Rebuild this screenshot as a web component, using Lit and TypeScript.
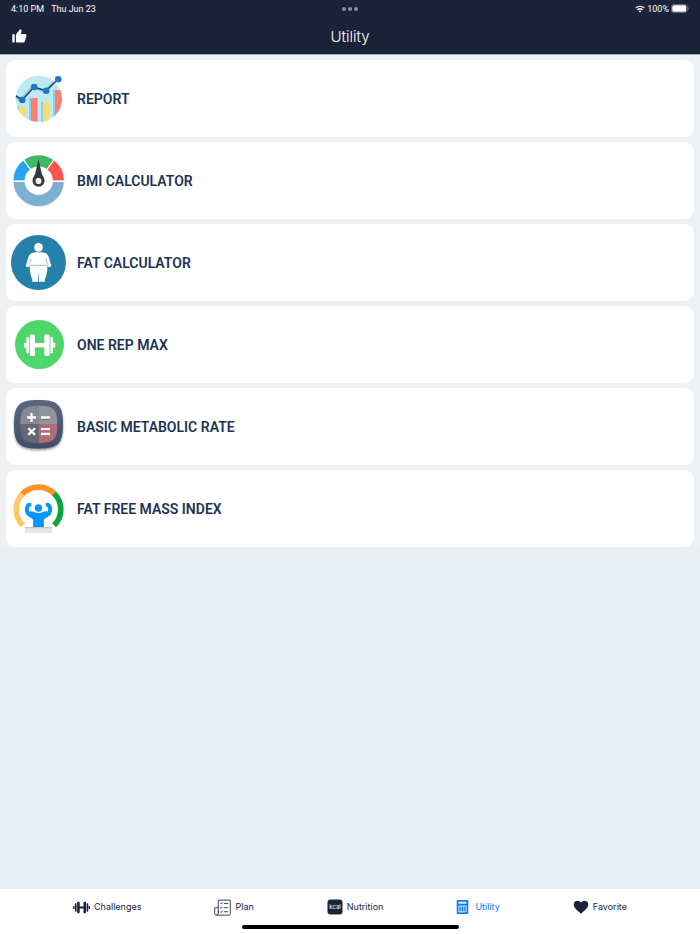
import { LitElement, html, svg, css } from "lit";
import { customElement, property, state } from "lit/decorators.js";
import { classMap } from "lit/directives/class-map.js";

const toolIcons: Record<string, unknown> = {
  report: svg`
    <defs><clipPath id="disc"><circle cx="38.8" cy="38.8" r="23.2"/></clipPath></defs>
    <circle cx="38.8" cy="38.8" r="23.2" fill="#bfeaf4"/>
    <g clip-path="url(#disc)">
      <path fill="#85d3e3" d="M17.5 46.7h3V62h-3zM29 38h3v24h-3zM41 42h3v20h-3zM53 30h3v32h-3z"/>
      <path fill="#f5dc6e" d="M19.3 46.7h6.5V62h-6.5zM43 42h6.6v20H43z"/>
      <path fill="#ff7d6e" d="M31 38h6.6v24H31zM55 30h7.5v32H55z"/>
      <path fill="none" stroke="#85d3e3" stroke-width="3" d="M15 36l5.500 4 12-13 12 4 12-11"/>
    </g>
    <path fill="none" stroke="#34404f" stroke-width="1.500" d="M16 36l6.200 4L34 27l12 3.800L58.200 19"/>
    <g fill="#1b78cc"><circle cx="22.200" cy="40" r="3.300"/><circle cx="34.200" cy="27" r="3.300"/><circle cx="46.200" cy="30.800" r="3.300"/><circle cx="58.200" cy="19.200" r="3.300"/></g>`,
  bmi: svg`
    <circle cx="38.700" cy="39.300" r="26" fill="#f0f0f0"/>
    <circle cx="38.700" cy="38.500" r="25.700" fill="#fff"/>
    <path fill="#25a4f5" d="M13.500 38.500A25.200 25.200 0 0 1 24 18L38.700 38.500z"/>
    <path fill="#3fb962" d="M24 18a25.200 25.200 0 0 1 29.400 0L38.700 38.500z"/>
    <path fill="#ff554b" d="M53.400 18a25.200 25.200 0 0 1 10.500 20.500H38.700z"/>
    <path fill="#7eb0d2" d="M13.500 39a25.200 25.200 0 0 0 50.400 0z"/>
    <path stroke="#fff" stroke-width="1.200" fill="none" d="M13 39.300h51.500M38.700 39L23.500 17.800M38.700 39l15.200-21.200"/>
    <circle cx="38.700" cy="38.800" r="14.200" fill="#fff"/>
    <path fill="#363a3d" d="M38.500 17.300L42 32.500c1.400 2.100 2.500 4 2.500 6.200a6 6 0 0 1-12 0c0-2.200 1.100-4.100 2.500-6.200z"/>
    <circle cx="38.500" cy="38.900" r="3" fill="#fff"/>`,
  fat: svg`
    <circle cx="38.500" cy="38.500" r="27.500" fill="#2581aa"/>
    <circle cx="38.500" cy="23.300" r="4.400" fill="#fff"/>
    <path fill="#fff" d="M35 28.200h7.200c3.600.4 5.800 2.200 6.700 5.300l2.200 7.500c.5 2-1.900 2.900-3.100 1.600l-.7-.8c.3 5.500-.9 10.500-2.600 13.900.1 1.200.5 1.600.5 2.100h-6.200l-.2-8.300h-.4l-.2 8.300H32c0-.5.400-.9.500-2.100-1.700-3.400-3-8.400-2.700-13.900l-.7.800c-1.200 1.300-3.600.4-3.100-1.600l2.200-7.500c.9-3.100 3.200-4.900 6.800-5.300z"/>
    <path fill="none" stroke="#2581aa" stroke-width=".5" d="M30 41.300h17.200M31.200 34.500l-1.700 6M45.900 34.500l1.700 6"/>`,
  dumbbell: svg`
    <circle cx="39.500" cy="38.500" r="24.500" fill="#4fd66b"/>
    <g fill="#fff"><rect x="29.700" y="28.500" width="5.300" height="21.500" rx="1.500"/><rect x="44.300" y="28.500" width="5.300" height="21.500" rx="1.500"/>
    <rect x="26.300" y="31" width="2.600" height="16.500" rx="1"/><rect x="50.400" y="31" width="2.600" height="16.500" rx="1"/>
    <rect x="24" y="36.800" width="2.500" height="5" rx=".8"/><rect x="52.800" y="36.800" width="2.500" height="5" rx=".8"/><rect x="34" y="37" width="11" height="4.400"/></g>`,
  bmr: svg`
    <defs>
      <linearGradient id="case" x2="0" y2="1"><stop stop-color="#5b6780"/><stop offset="1" stop-color="#434e65"/></linearGradient>
      <filter id="drop" x="-20%" y="-20%" width="140%" height="150%"><feDropShadow dx="0" dy="1.500" stdDeviation="1" flood-opacity=".4"/></filter>
      <clipPath id="pad"><path d="M38.800 17.700c15 0 18.500 3.500 18.500 18.600S53.800 55 38.800 55s-18.500-3.500-18.500-18.700 3.500-18.600 18.500-18.600z"/></clipPath>
    </defs>
    <path filter="url(#drop)" fill="url(#case)" d="M38.500 12C58 12 63 17 63 36.300s-5 24.400-24.500 24.400S14 55.600 14 36.300 19 12 38.500 12z"/>
    <g clip-path="url(#pad)"><path fill="#858b95" d="M20 17h18.700v19H20z"/><path fill="#91959d" d="M38.700 17H58v19H38.700z"/><path fill="#636975" d="M20 36h18.700v20H20z"/><path fill="#b46b78" d="M38.700 36H58v20H38.700z"/></g>
    <path fill="none" stroke="#333b4b" stroke-opacity=".35" stroke-width="2" d="M31.500 26v9M27 30.500h9M41.500 31H50M28.300 41.300l6.700 6.700M35 41.300L28.300 48M41.500 42H50M41.500 47H50"/>
    <path fill="none" stroke="#fff" stroke-width="2.300" d="M31.500 25v9M27 29.500h9M41 29.500h9M28.300 40.200l6.700 6.700M35 40.200l-6.700 6.700M41 41.200h9M41 46h9"/>`,
  mass: svg`
    <g fill="none" stroke-width="5.600">
      <path stroke="#ffc765" d="M22.900 55.300A22.200 22.200 0 0 1 22.900 23.500"/>
      <path stroke="#ff9227" d="M22.500 23.900a22.200 22.200 0 0 1 32 0"/>
      <path stroke="#09a63e" d="M54.100 23.500a22.200 22.200 0 0 1 0 31.800"/>
    </g>
    <circle cx="38.500" cy="38" r="3.700" fill="#0794fb"/>
    <path fill="none" stroke="#0794fb" stroke-width="4" stroke-linecap="round" stroke-linejoin="round" d="M28.500 35c-2 1.800-2 6.200-.5 8.500l6.200 4M48.500 35c2 1.800 2 6.200.5 8.500l-6.200 4"/>
    <path fill="#0794fb" d="M28 42.500c1.800-1.600 4.500-1.400 6.500-.3 2.500 1 5.500 1 8 0 2-1.100 4.700-1.300 6.500.3l-5.200 7.500.2 7.500H33l.2-7.500zM28 33h3.300v3.500H28zM45.700 33H49v3.500h-3.300z"/>
    <path fill="#e9e6e2" d="M25 57h27v6H25z"/><path fill="#c9c6c3" d="M25 57h27v1.200H25z"/>`,
};

const tabIcons: Record<string, unknown> = {
  challenges: svg`<svg viewBox="0 0 18 18" width="17" height="17" fill="currentColor" aria-hidden="true"><rect x="4.400" y="3" width="2.700" height="12" rx=".9"/><rect x="11.100" y="3" width="2.700" height="12" rx=".9"/><rect x="2" y="4.500" width="1.800" height="9" rx=".7"/><rect x="14.400" y="4.500" width="1.800" height="9" rx=".7"/><path d="M.2 7.300h1.400v3.400H.2zM16.600 7.300H18v3.400h-1.400zM6.500 8h5v2h-5z"/></svg>`,
  plan: svg`<svg viewBox="0 0 18 18" width="17" height="17" fill="none" stroke="currentColor" stroke-width=".9" aria-hidden="true"><path d="M4.500 14.500V1.200h12.800v14.300a1.600 1.600 0 0 1-1.600 1.600H2.500a1.800 1.800 0 0 1-1.800-1.800V9.200h3.800M4.500 13v2.200a2 2 0 0 1-2 1.900"/><path d="M6.500 4.500l1 1 1.800-2M6.500 9l1 1 1.800-2M6.500 13.300l1 1 1.800-2M10.500 4.800H15M10.500 9.200H15M10.500 13.500H15"/></svg>`,
  nutrition: svg`<svg viewBox="0 0 16 16" width="16" height="16" aria-hidden="true"><rect x=".5" y=".5" width="15" height="15" rx="3" fill="currentColor"/><text x="8" y="10" text-anchor="middle" font-size="6" fill="#fff">kcal</text></svg>`,
  utility: svg`<svg viewBox="0 0 13 16" width="13" height="16" aria-hidden="true"><rect x=".7" y="1" width="11.600" height="14" rx="1" fill="currentColor"/><path fill="#fff" d="M2.500 2.800h8v1.800h-8z"/><path stroke="#fff" stroke-width=".8" fill="none" d="M2.800 7h7.400v5.900H2.800zM5.200 7v5.900M7.800 7v5.900"/></svg>`,
  favorite: svg`<svg viewBox="0 0 16 16" width="16" height="16" fill="currentColor" aria-hidden="true"><path d="M8 14.800C3.500 11 .7 8.500.7 5.600c0-2.300 1.700-3.900 3.800-3.900 1.400 0 2.700.7 3.500 1.800.8-1.100 2.100-1.800 3.500-1.800 2.100 0 3.800 1.600 3.800 3.900 0 2.900-2.800 5.400-7.300 9.200z"/></svg>`,
};

@customElement("tool-card")
class ToolCard extends LitElement {
  @property() label = "";
  @property() icon = "";

  static styles = css`
    :host { display: block; }
    .card {
      display: flex; align-items: center; gap: 6px; width: 100%; padding: 0;
      border: 0; border-radius: 9px; background: #fff; color: #1d3354;
      font: 600 14px/20px Roboto, "Liberation Sans", sans-serif; text-align: left; cursor: pointer;
    }
    .icon { display: block; flex: none; }
  `;

  render() {
    return html`<button class="card" type="button">
      <svg class="icon" viewBox="6 0 65 77" width="65" height="77" aria-hidden="true">${toolIcons[this.icon]}</svg>
      <span>${this.label}</span>
    </button>`;
  }
}

@customElement("app-root")
class AppRoot extends LitElement {
  @state() private active = "utility";

  private tools = [
    { icon: "report", label: "REPORT" },
    { icon: "bmi", label: "BMI CALCULATOR" },
    { icon: "fat", label: "FAT CALCULATOR" },
    { icon: "dumbbell", label: "ONE REP MAX" },
    { icon: "bmr", label: "BASIC METABOLIC RATE" },
    { icon: "mass", label: "FAT FREE MASS INDEX" },
  ];

  private tabs = [
    { id: "challenges", label: "Challenges" },
    { id: "plan", label: "Plan" },
    { id: "nutrition", label: "Nutrition" },
    { id: "utility", label: "Utility" },
    { id: "favorite", label: "Favorite" },
  ];

  static styles = css`
    :host {
      display: flex; flex-direction: column; min-height: 100vh; background: #e9eff2;
      font-family: Roboto, "Liberation Sans", sans-serif; color: #1b2338;
    }
    svg { display: block; flex: none; }
    header { background: #1b2338; color: #fff; border-bottom: 1px solid #a9afb9; }
    .status, .nav { display: grid; grid-template-columns: 1fr auto 1fr; align-items: center; padding: 0 11px; }
    .status { height: 17px; font-size: 9px; line-height: 16px; }
    .clock { display: flex; gap: 7px; }
    .dots { display: flex; gap: 2px; }
    .dot { width: 4px; height: 4px; border-radius: 50%; background: #8d91a0; }
    .power { display: flex; align-items: center; justify-content: flex-end; gap: 2px; }
    .nav { height: 37px; }
    .like { justify-self: start; padding: 0; border: 0; background: none; color: #fff; cursor: pointer; }
    h1 { margin: 0; font: 300 15px/20px Inter, "Liberation Sans", sans-serif; padding-top: 2px; }
    main { flex: 1; }
    .tools { list-style: none; margin: 0; padding: 5px 6px 0; display: grid; gap: 5px; background: #edf1f4; }
    footer { background: #fff; display: flex; flex-direction: column; align-items: center; padding-bottom: 5px; }
    nav { width: 100%; height: 36px; display: flex; justify-content: space-evenly; align-items: center; }
    .tab {
      display: flex; align-items: center; gap: 4px; color: #1b2338; text-decoration: none;
      font-family: Inter, "Liberation Sans", sans-serif; font-size: 9px; line-height: 20px;
    }
    .active { color: #0a7aff; gap: 6px; }
    .home { width: 31%; height: 4px; border-radius: 2px; background: #000; }
  `;

  private select(e: Event, id: string) {
    e.preventDefault();
    this.active = id;
  }

  render() {
    return html`
      <header>
        <div class="status">
          <div class="clock"><span>4:10 PM</span><span>Thu Jun 23</span></div>
          <div class="dots"><i class="dot"></i><i class="dot"></i><i class="dot"></i></div>
          <div class="power">
            <svg viewBox="0 0 10 8" width="10" height="8" fill="none" stroke="#fff" stroke-width="1.300" aria-hidden="true"><path d="M.8 3a6.200 6.200 0 0 1 8.400 0M2.500 4.900a3.700 3.700 0 0 1 5 0"/><path fill="#fff" stroke="none" d="M3.700 6a2 2 0 0 1 2.600 0L5 7.500z"/></svg>
            <span>100%</span>
            <svg viewBox="0 0 18 9" width="18" height="9" aria-hidden="true"><rect x=".4" y=".4" width="15.700" height="8.200" rx="2.400" fill="none" stroke="#7c8190" stroke-width=".8"/><rect x="1.300" y="1.300" width="13.900" height="6.400" rx="1.500" fill="#fff"/><path fill="#7c8190" d="M16.800 3c1.200.4 1.200 2.600 0 3z"/></svg>
          </div>
        </div>
        <div class="nav">
          <button class="like" type="button" aria-label="Like">
            <svg viewBox="0 0 16 16" width="16" height="16" fill="currentColor" aria-hidden="true"><rect x="1.300" y="6" width="2.400" height="8.500" rx=".8"/><path d="M4.900 7.200c0-.5.2-.8.500-1.100L9 1.200c1.300.2 1.800 1.200 1.500 2.300L9.900 6h4.300c1 0 1.600.9 1.300 1.800l-1.800 5.600c-.3.800-.8 1.200-1.600 1.200H6.300c-.8 0-1.400-.6-1.400-1.400z"/></svg>
          </button>
          <h1>Utility</h1>
        </div>
      </header>
      <main>
        <ul class="tools">
          ${this.tools.map((t) => html`<li><tool-card .label=${t.label} .icon=${t.icon}></tool-card></li>`)}
        </ul>
      </main>
      <footer>
        <nav>
          ${this.tabs.map((t) => html`<a class=${classMap({ tab: true, active: t.id === this.active })} href="#${t.id}"
            @click=${(e: Event) => this.select(e, t.id)}>${tabIcons[t.id]}<span>${t.label}</span></a>`)}
        </nav>
        <div class="home"></div>
      </footer>
    `;
  }
}
